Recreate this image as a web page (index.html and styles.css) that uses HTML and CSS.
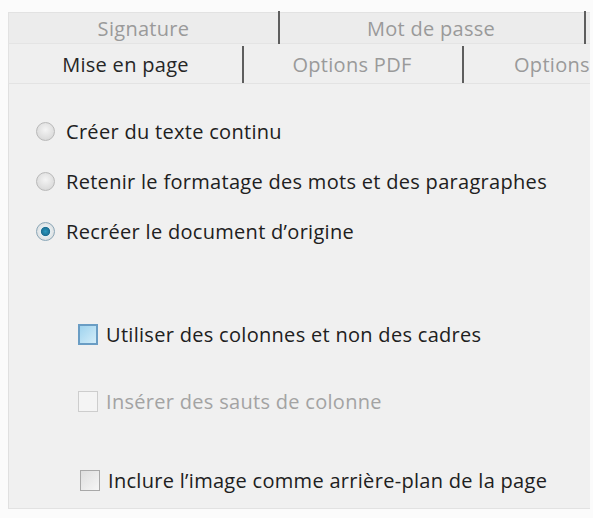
FILE: index.html
```html
<!DOCTYPE html>
<html lang="fr">
<head>
<meta charset="utf-8">
<link rel="stylesheet" href="styles.css">
</head>
<body>
<div class="dialog">
  <div class="tabs">
    <div class="tab-row back">
      <div class="tab t-sig">Signature</div>
      <div class="tab t-pwd">Mot de passe</div>
    </div>
    <div class="tab-row front">
      <div class="tab t-page active">Mise en page</div>
      <div class="tab t-pdf">Options PDF</div>
      <div class="tab t-opt">Options</div>
    </div>
  </div>
  <div class="panel">
    <div class="radios">
      <label class="option"><span class="radio"></span><span class="label">Créer du texte continu</span></label>
      <label class="option"><span class="radio"></span><span class="label">Retenir le formatage des mots et des paragraphes</span></label>
      <label class="option"><span class="radio checked"></span><span class="label">Recréer le document d’origine</span></label>
    </div>
    <div class="checks">
      <label class="option c1"><span class="check hover"></span><span class="label">Utiliser des colonnes et non des cadres</span></label>
      <label class="option c2 disabled"><span class="check dis"></span><span class="label">Insérer des sauts de colonne</span></label>
      <label class="option c3"><span class="check"></span><span class="label">Inclure l’image comme arrière-plan de la page</span></label>
    </div>
  </div>
</div>
</body>
</html>
```

FILE: styles.css
```css
html, body {
  margin: 0;
  padding: 0;
  background: #fbfbfb;
}
body {
  font-family: "Open Sans", "Noto Sans", sans-serif;
  font-size: 20px;
  letter-spacing: 0.3px;
  color: #202020;
}
.dialog {
  margin: 12px 0 0 8px;
  width: 582px;
}
.tabs {
  display: flex;
  flex-direction: column;
}
.tab-row {
  display: flex;
  white-space: nowrap;
}
.tab-row.back {
  height: 30px;
  background: #ececec;
  border-top: 1px solid #e2e2e2;
  border-left: 1px solid #e2e2e2;
  border-bottom: 1px solid #e4e4e4;
}
.tab-row.front {
  height: 39px;
  background: #efefef;
  border-left: 1px solid #e2e2e2;
  border-bottom: 1px solid #e3e3e3;
  overflow: hidden;
}
.tab {
  display: flex;
  align-items: center;
  justify-content: center;
  color: #9a9a9a;
  position: relative;
  flex: none;
}
.tab.active { color: #262626; }
.t-sig { width: 269px; }
.t-pwd { width: 306px; }
.t-page { width: 233px; padding-top: 2px; }
.t-pdf { width: 220px; padding-top: 2px; }
.t-opt { flex: 1 1 auto; justify-content: flex-start; padding-left: 52px; padding-top: 2px; }
.t-sig::after, .t-pwd::after {
  content: "";
  position: absolute;
  right: -2px;
  top: -2px;
  width: 2px;
  height: 33px;
  background: #5e5e5e;
}
.t-page::after, .t-pdf::after {
  content: "";
  position: absolute;
  right: -2px;
  top: 2px;
  width: 2px;
  height: 37px;
  background: #5e5e5e;
}
.panel {
  background: #f0f0f0;
  border-left: 1px solid #e0e0e0;
  border-bottom: 1px solid #e2e2e2;
  height: 425px;
  box-sizing: border-box;
  padding-top: 35px;
}
.radios {
  display: flex;
  flex-direction: column;
  gap: 26px;
  padding-left: 27px;
}
.option {
  display: flex;
  align-items: center;
  height: 24px;
}
.radio {
  width: 17px;
  height: 17px;
  border-radius: 50%;
  border: 1px solid #b9b9b9;
  background: radial-gradient(circle at 50% 40%, #f4f4f4 0%, #dcdcdc 70%, #cfcfcf 100%);
  margin-right: 11px;
  flex: none;
}
.radio.checked {
  background: radial-gradient(circle at 50% 50%, #2a9ac0 0%, #1d6f93 35%, #e6eef2 42%, #dcdcdc 80%);
  border-color: #8aa7b8;
}
.checks {
  display: flex;
  flex-direction: column;
  padding-left: 69px;
  margin-top: 79px;
}
.check {
  width: 20px;
  height: 21px;
  box-sizing: border-box;
  border: 1px solid #a8a8a8;
  background: linear-gradient(135deg, #dedede, #f6f6f6);
  margin-right: 8px;
  flex: none;
}
.check.hover {
  border: 2px solid #6a9dc4;
  background: linear-gradient(135deg, #9fd3ee, #d3edf9);
}
.check.dis {
  border-color: #cdcdcd;
  background: #f4f4f4;
}
.c2 { margin-top: 43px; }
.c3 { margin-top: 55px; padding-left: 2px; }
.disabled .label { color: #a3a3a3; }
.label { white-space: nowrap; }
```
